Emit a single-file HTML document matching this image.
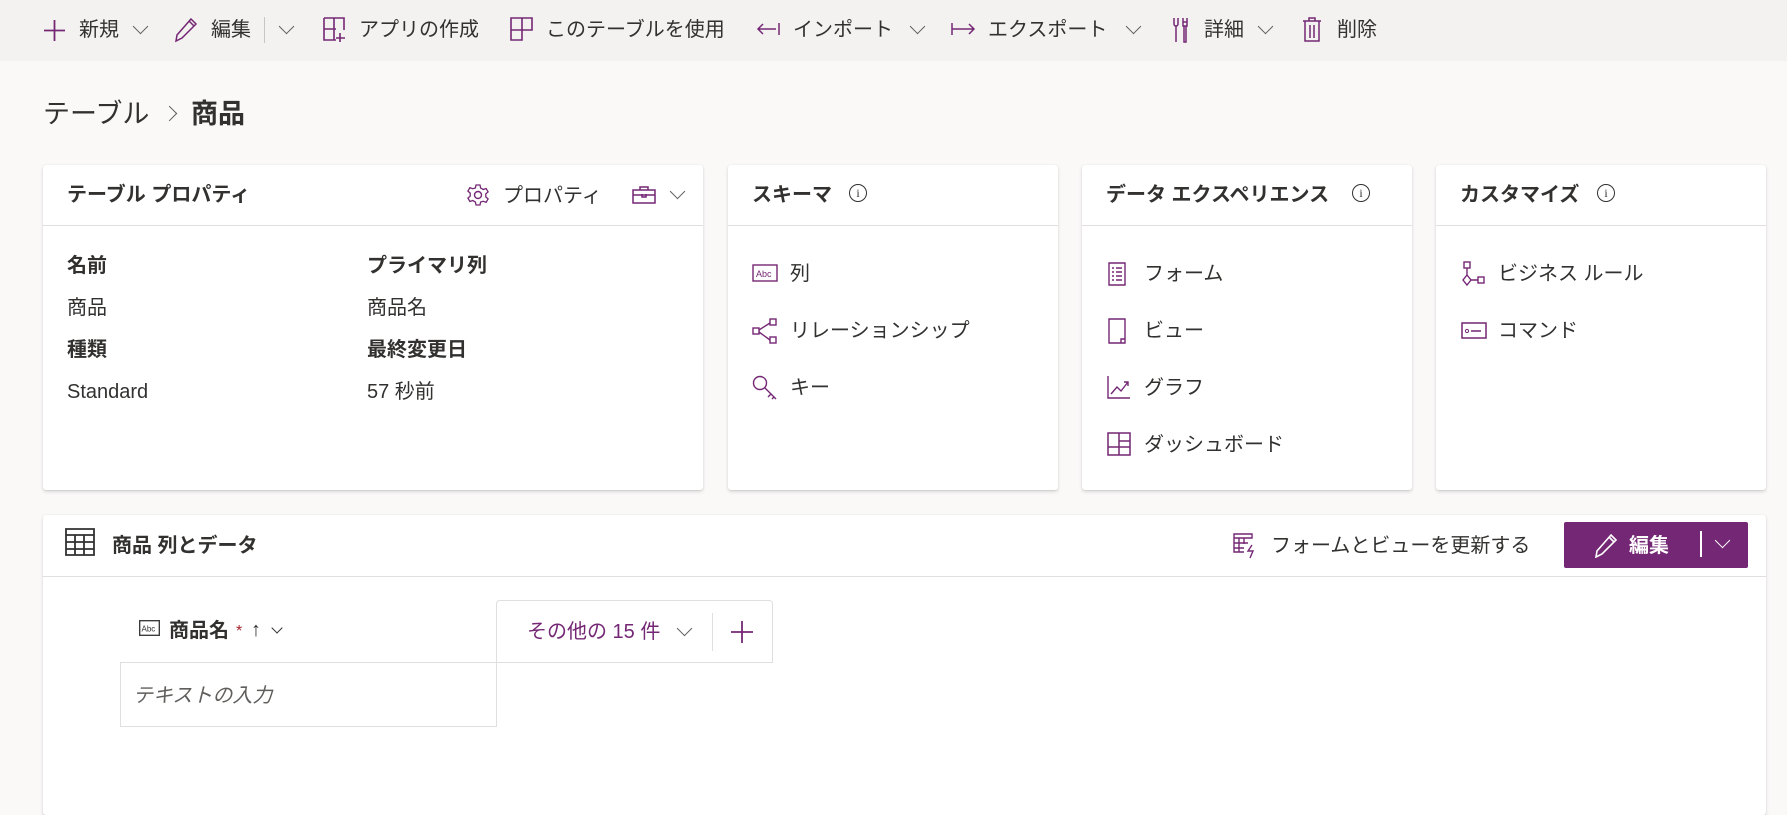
<!DOCTYPE html>
<html><head><meta charset="utf-8"><style>
*{margin:0;padding:0;box-sizing:border-box}
body{width:1787px;height:773px;overflow:hidden;background:#faf9f8;font-family:"Liberation Sans","Noto Sans CJK JP",sans-serif;color:#323130;position:relative}
.a{position:absolute;white-space:nowrap;line-height:24px}
.tb{position:absolute;left:0;top:0;width:1787px;height:61px;background:#f3f2f1}
.t{font-size:20px;line-height:24px;top:18px}
.chev{width:11px;height:11px;border-right:1.5px solid #605e5c;border-bottom:1.5px solid #605e5c;transform:rotate(45deg)}
.card{position:absolute;background:#fff;border-radius:3px;box-shadow:0 1.6px 3.6px rgba(0,0,0,.13),0 .3px .9px rgba(0,0,0,.11)}
.hd{position:absolute;left:0;right:0;top:0;height:61px;border-bottom:1px solid #e1dfdd}
.ht{font-size:20px;font-weight:bold;top:183px}
.bt{font-size:20px;line-height:24px}
.b{font-weight:bold}
.info{width:18px;height:18px;border:1.3px solid #323130;border-radius:50%;font-size:12px;line-height:16px;text-align:center;font-family:"Liberation Serif",serif}
svg{position:absolute}
</style></head><body>
<div class="tb"></div>
<svg style="left:43px;top:19px" width="23" height="23" viewBox="0 0 23 23"><path d="M11.5 1v21M1 11.5h21" stroke="#742774" stroke-width="1.8"/></svg>
<div class="a t" style="left:79px">新規</div>
<div class="a chev" style="left:135px;top:21px"></div>
<svg style="left:174px;top:17px" width="24" height="26" viewBox="0 0 24 26"><path d="M17 2l5 5L8 21l-6 3 1-6z M15 4l5 5" fill="none" stroke="#742774" stroke-width="1.5"/></svg>
<div class="a t" style="left:211px">編集</div>
<div class="a" style="left:264px;top:17px;width:1px;height:26px;background:#c8c6c4"></div>
<div class="a chev" style="left:281px;top:21px"></div>
<svg style="left:323px;top:17px" width="24" height="26" viewBox="0 0 24 26"><path d="M1 1h20v12M1 1v22h12M1 12h12M11 1v22M17 16v9M13 21h9" fill="none" stroke="#742774" stroke-width="1.6"/></svg>
<div class="a t" style="left:359px">アプリの作成</div>
<svg style="left:510px;top:17px" width="24" height="26" viewBox="0 0 24 26"><path d="M1 1h21v12H1zM1 1v22h11V1" fill="none" stroke="#742774" stroke-width="1.6"/></svg>
<div class="a t" style="left:546px">このテーブルを使用</div>
<svg style="left:756px;top:21px" width="24" height="16" viewBox="0 0 24 16"><path d="M2 8h18M7 3L2 8l5 5M23 2v12" fill="none" stroke="#742774" stroke-width="1.5"/></svg>
<div class="a t" style="left:793px">インポート</div>
<div class="a chev" style="left:912px;top:21px"></div>
<svg style="left:951px;top:21px" width="26" height="16" viewBox="0 0 26 16"><path d="M1 2v12M1 8h22M18 3l5 5-5 5" fill="none" stroke="#742774" stroke-width="1.5"/></svg>
<div class="a t" style="left:988px">エクスポート</div>
<div class="a chev" style="left:1128px;top:21px"></div>
<svg style="left:1171px;top:16px" width="18" height="28" viewBox="0 0 18 28"><path d="M3 2v6a2 2 0 004 0V2M5 10v16M12 2v4h4V2M12 6v4h4V6M13 10v16h2V10" fill="none" stroke="#742774" stroke-width="1.5"/></svg>
<div class="a t" style="left:1204px">詳細</div>
<div class="a chev" style="left:1260px;top:21px"></div>
<svg style="left:1302px;top:16px" width="20" height="27" viewBox="0 0 20 27"><path d="M1 5h18M7 5V2h6v3M3 5v20h14V5M8 9v13M12 9v13" fill="none" stroke="#742774" stroke-width="1.5"/></svg>
<div class="a t" style="left:1337px">削除</div>

<div class="a" style="left:43px;top:98px;font-size:27px;line-height:32px">テーブル</div>
<div class="a" style="left:164px;top:108px;width:11px;height:11px;border-right:1.5px solid #605e5c;border-top:1.5px solid #605e5c;transform:rotate(45deg)"></div>
<div class="a b" style="left:191px;top:98px;font-size:27px;line-height:32px">商品</div>

<div class="card" style="left:43px;top:165px;width:660px;height:325px"><div class="hd"></div></div>
<div class="card" style="left:728px;top:165px;width:330px;height:325px"><div class="hd"></div></div>
<div class="card" style="left:1082px;top:165px;width:330px;height:325px"><div class="hd"></div></div>
<div class="card" style="left:1436px;top:165px;width:330px;height:325px"><div class="hd"></div></div>

<div class="a ht" style="left:67px">テーブル プロパティ</div>
<svg style="left:466px;top:183px" width="24" height="24" viewBox="0 0 24 24"><circle cx="12" cy="12" r="3.5" fill="none" stroke="#742774" stroke-width="1.4"/><path d="M10 2h4l.6 3 2.6 1.5 2.9-1 2 3.4-2.3 2v3l2.3 2-2 3.4-2.9-1L14.6 19 14 22h-4l-.6-3-2.6-1.5-2.9 1-2-3.4 2.3-2v-3l-2.3-2 2-3.4 2.9 1L9.4 5z" fill="none" stroke="#742774" stroke-width="1.3"/></svg>
<div class="a bt" style="left:503px;top:184px">プロパティ</div>
<svg style="left:632px;top:186px" width="24" height="18" viewBox="0 0 24 18"><path d="M1 4h22v13H1zM8 4V1h8v3M1 9h22M10 8v3h4V8" fill="none" stroke="#742774" stroke-width="1.5"/></svg>
<div class="a chev" style="left:672px;top:186px"></div>

<div class="a bt b" style="left:67px;top:254px">名前</div>
<div class="a bt b" style="left:367px;top:254px">プライマリ列</div>
<div class="a bt" style="left:67px;top:296px">商品</div>
<div class="a bt" style="left:367px;top:296px">商品名</div>
<div class="a bt b" style="left:67px;top:338px">種類</div>
<div class="a bt b" style="left:367px;top:338px">最終変更日</div>
<div class="a bt" style="left:67px;top:380px">Standard</div>
<div class="a bt" style="left:367px;top:380px">57 秒前</div>

<div class="a ht" style="left:752px">スキーマ</div>
<div class="a info" style="left:849px;top:184px">i</div>
<svg style="left:752px;top:264px" width="26" height="18" viewBox="0 0 26 18"><rect x="1" y="1" width="24" height="16" fill="none" stroke="#742774" stroke-width="1.4"/><text x="4" y="13" font-size="9" fill="#742774" font-family="Liberation Sans">Abc</text></svg>
<div class="a bt" style="left:790px;top:262px">列</div>
<svg style="left:752px;top:318px" width="26" height="26" viewBox="0 0 26 26"><rect x="1" y="10" width="6" height="6" fill="none" stroke="#742774" stroke-width="1.4"/><rect x="18" y="1" width="6" height="6" fill="none" stroke="#742774" stroke-width="1.4"/><rect x="18" y="19" width="6" height="6" fill="none" stroke="#742774" stroke-width="1.4"/><path d="M7 12l11-7M7 14l11 8" stroke="#742774" stroke-width="1.4"/></svg>
<div class="a bt" style="left:790px;top:319px">リレーションシップ</div>
<svg style="left:752px;top:375px" width="26" height="26" viewBox="0 0 26 26"><circle cx="8" cy="8" r="6.5" fill="none" stroke="#742774" stroke-width="1.4"/><path d="M12.5 12.5L24 24M19 19l-3 3M22 22l-2 2" stroke="#742774" stroke-width="1.4"/></svg>
<div class="a bt" style="left:790px;top:376px">キー</div>

<div class="a ht" style="left:1106px">データ エクスペリエンス</div>
<div class="a info" style="left:1352px;top:184px">i</div>
<svg style="left:1108px;top:262px" width="18" height="24" viewBox="0 0 18 24"><path d="M1 1h16v22H1zM4 6h2M8 6h6M4 10h2M8 10h6M4 14h2M8 14h6M4 18h2M8 18h6" fill="none" stroke="#742774" stroke-width="1.4"/></svg>
<div class="a bt" style="left:1144px;top:262px">フォーム</div>
<svg style="left:1108px;top:318px" width="18" height="26" viewBox="0 0 18 26"><path d="M1 1h16v24H1zM13 25v-4h4" fill="none" stroke="#742774" stroke-width="1.4"/></svg>
<div class="a bt" style="left:1144px;top:319px">ビュー</div>
<svg style="left:1107px;top:375px" width="24" height="24" viewBox="0 0 24 24"><path d="M1 1v22h22M4 19l6-7 4 4 7-9M17 7h4v4" fill="none" stroke="#742774" stroke-width="1.4"/></svg>
<div class="a bt" style="left:1144px;top:376px">グラフ</div>
<svg style="left:1107px;top:432px" width="24" height="24" viewBox="0 0 24 24"><path d="M1 1h22v22H1zM12 1v22M12 9h11M1 15h22" fill="none" stroke="#742774" stroke-width="1.5"/></svg>
<div class="a bt" style="left:1144px;top:433px">ダッシュボード</div>

<div class="a ht" style="left:1460px">カスタマイズ</div>
<div class="a info" style="left:1597px;top:184px">i</div>
<svg style="left:1461px;top:261px" width="24" height="26" viewBox="0 0 24 26"><rect x="3" y="1" width="6" height="6" fill="none" stroke="#742774" stroke-width="1.4"/><rect x="17" y="16" width="6" height="6" fill="none" stroke="#742774" stroke-width="1.4"/><path d="M6 7v8M6 14l4 5-4 5-4-5zM10 19h7" fill="none" stroke="#742774" stroke-width="1.4"/></svg>
<div class="a bt" style="left:1498px;top:262px">ビジネス ルール</div>
<svg style="left:1461px;top:322px" width="26" height="18" viewBox="0 0 26 18"><rect x="1" y="1" width="24" height="15" fill="none" stroke="#742774" stroke-width="1.5"/><circle cx="6" cy="9" r="1.6" fill="none" stroke="#742774"/><path d="M10 9h10" stroke="#742774" stroke-width="1.5"/></svg>
<div class="a bt" style="left:1498px;top:319px">コマンド</div>

<div class="card" style="left:43px;top:515px;width:1723px;height:300px"><div class="hd" style="height:62px"></div></div>
<svg style="left:65px;top:528px" width="30" height="28" viewBox="0 0 30 28"><path d="M1 1h28v26H1zM1 7h28M1 14h28M1 21h28M10 7v20M19 7v20" fill="none" stroke="#323130" stroke-width="1.8"/></svg>
<div class="a b" style="left:112px;top:534px;font-size:20px">商品 列とデータ</div>
<svg style="left:1233px;top:533px" width="26" height="26" viewBox="0 0 26 26"><path d="M1 1h18v4H1zM1 5v14h10M1 10h14M1 15h10M6 5v14M11 5v6M19 12l-4 6h5l-3 7" fill="none" stroke="#742774" stroke-width="1.4"/></svg>
<div class="a bt" style="left:1271px;top:534px">フォームとビューを更新する</div>
<div class="a" style="left:1564px;top:522px;width:184px;height:46px;background:#742774;border-radius:2px"></div>
<svg style="left:1594px;top:533px" width="24" height="25" viewBox="0 0 24 25"><path d="M17 2l5 5L8 21l-6 3 1-6z M15 4l5 5" fill="none" stroke="#fff" stroke-width="1.6"/></svg>
<div class="a b" style="left:1629px;top:534px;font-size:20px;color:#fff">編集</div>
<div class="a" style="left:1700px;top:531px;width:1.5px;height:26px;background:#fff"></div>
<div class="a" style="left:1717px;top:535px;width:11px;height:11px;border-right:1.5px solid #fff;border-bottom:1.5px solid #fff;transform:rotate(45deg)"></div>

<svg style="left:139px;top:620px" width="21" height="16" viewBox="0 0 21 16"><rect x=".7" y=".7" width="19.6" height="14.6" fill="none" stroke="#323130" stroke-width="1.3"/><text x="2.5" y="11.5" font-size="8" fill="#323130" font-family="Liberation Sans">Abc</text></svg>
<div class="a b" style="left:169px;top:619px;font-size:20px">商品名</div>
<div class="a" style="left:236px;top:620px;color:#a4262c;font-size:16px">*</div>
<div class="a" style="left:251px;top:618px;font-size:20px">↑</div>
<div class="a" style="left:273px;top:624px;width:8px;height:8px;border-right:1.4px solid #323130;border-bottom:1.4px solid #323130;transform:rotate(45deg)"></div>
<div class="a" style="left:120px;top:662px;width:377px;height:65px;border:1px solid #e1dfdd;background:#fff"></div>
<div class="a" style="left:133px;top:684px;font-size:20px;color:#605e5c;font-style:italic">テキストの入力</div>
<div class="a" style="left:496px;top:600px;width:277px;height:63px;border:1px solid #e1dfdd;border-radius:4px 4px 0 0;background:#fff"></div>
<div class="a" style="left:527px;top:620px;font-size:20px;color:#742774">その他の 15 件</div>
<div class="a chev" style="left:679px;top:623px"></div>
<div class="a" style="left:712px;top:613px;width:1px;height:38px;background:#e1dfdd"></div>
<svg style="left:730px;top:620px" width="24" height="24" viewBox="0 0 24 24"><path d="M12 1v22M1 12h22" stroke="#742774" stroke-width="1.8"/></svg>
</body></html>
